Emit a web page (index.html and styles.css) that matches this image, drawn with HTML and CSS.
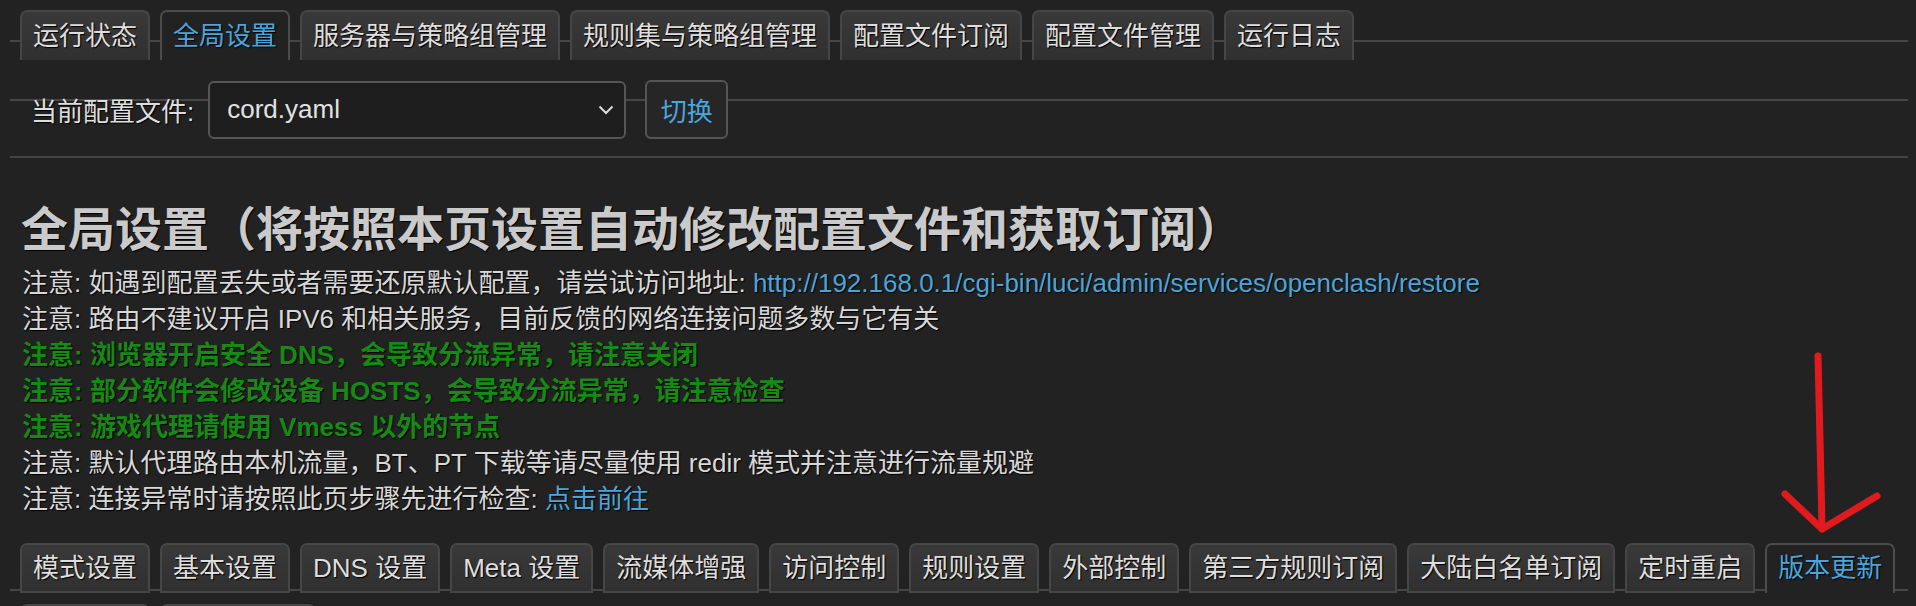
FILE: index.html
```html
<!DOCTYPE html>
<html lang="zh-CN">
<head>
    <meta charset="UTF-8">
    <meta name="viewport" content="width=device-width, initial-scale=1.0">
    <title>OpenClash - 全局设置</title>
    <link rel="stylesheet" href="styles.css">
</head>
<body>
    <div class="page">
        <!-- Main tabs -->
        <ul class="tabs top-tabs">
            <li class="tab">运行状态</li>
            <li class="tab active">全局设置</li>
            <li class="tab">服务器与策略组管理</li>
            <li class="tab">规则集与策略组管理</li>
            <li class="tab">配置文件订阅</li>
            <li class="tab">配置文件管理</li>
            <li class="tab">运行日志</li>
        </ul>

        <!-- Config file switcher -->
        <div class="cfg-row">
            <label class="cfg-label" for="cfgFile">当前配置文件:</label>
            <div class="select-box" id="cfgFile">
                <span>cord.yaml</span>
                <svg class="chevron" width="16" height="10" viewBox="0 0 16 10">
                    <polyline points="1.5,1.5 8,8 14.5,1.5" fill="none" stroke="#dcdcdc" stroke-width="2"/>
                </svg>
            </div>
            <button class="btn">切换</button>
        </div>

        <div class="divider"></div>

        <h2 class="title">全局设置（将按照本页设置自动修改配置文件和获取订阅）</h2>

        <div class="notes">
            <p>注意: 如遇到配置丢失或者需要还原默认配置，请尝试访问地址: <a href="#">http://192.168.0.1/cgi-bin/luci/admin/services/openclash/restore</a></p>
            <p>注意: 路由不建议开启 IPV6 和相关服务，目前反馈的网络连接问题多数与它有关</p>
            <p class="warn">注意: 浏览器开启安全 DNS，会导致分流异常，请注意关闭</p>
            <p class="warn">注意: 部分软件会修改设备 HOSTS，会导致分流异常，请注意检查</p>
            <p class="warn">注意: 游戏代理请使用 Vmess 以外的节点</p>
            <p>注意: 默认代理路由本机流量，BT、PT 下载等请尽量使用 redir 模式并注意进行流量规避</p>
            <p>注意: 连接异常时请按照此页步骤先进行检查: <a href="#">点击前往</a></p>
        </div>

        <!-- Settings tabs -->
        <ul class="tabs sub-tabs">
            <li class="tab">模式设置</li>
            <li class="tab">基本设置</li>
            <li class="tab">DNS 设置</li>
            <li class="tab">Meta 设置</li>
            <li class="tab">流媒体增强</li>
            <li class="tab">访问控制</li>
            <li class="tab">规则设置</li>
            <li class="tab">外部控制</li>
            <li class="tab">第三方规则订阅</li>
            <li class="tab">大陆白名单订阅</li>
            <li class="tab">定时重启</li>
            <li class="tab active">版本更新</li>
            <li class="tab">调试日志</li>
            <li class="tab">开发者选项</li>
        </ul>

        <!-- red hand-drawn arrow pointing at 版本更新 -->
        <svg class="arrow" width="110" height="190" viewBox="0 0 110 190">
            <path d="M43 6 C44 60 46 120 47 179" fill="none" stroke="#e11b1d" stroke-width="7" stroke-linecap="round"/>
            <path d="M10 144 L47 179 L102 146" fill="none" stroke="#e11b1d" stroke-width="7" stroke-linecap="round" stroke-linejoin="round"/>
        </svg>
    </div>
</body>
</html>
```

FILE: styles.css
```css
/* dark luci theme */
html, body {
    margin: 0;
    padding: 0;
    overflow: hidden;
}

body {
    background-color: #222222;
    color: #d6d6d6;
    font-family: "Liberation Sans", "Noto Sans CJK SC", sans-serif;
    font-size: 26px;
}

.page {
    position: relative;
    padding: 10px 8px 0 10px;
}

/* tabs */
.tabs {
    list-style: none;
    margin: 0;
    padding: 0 0 0 10px;
    display: flex;
    flex-wrap: wrap;
    column-gap: 10px;
}

.tab {
    height: 48px;
    line-height: 48px;
    padding: 0 11px;
    border: 2px solid #464646;
    border-bottom: none;
    border-radius: 7px 7px 0 0;
    background: linear-gradient(#393939, #303030);
    color: #dedede;
    text-shadow: 1px 1px 1px #000;
    white-space: nowrap;
}

.tab.active {
    background: #222222;
    color: #4aa5dc;
    border-color: #4c4c4c;
}

.top-tabs {
    background: linear-gradient(#464646, #464646) no-repeat 0 30px / 100% 2px;
}

.sub-tabs {
    margin-top: 26px;
    row-gap: 11px;
    background-image: linear-gradient(to bottom, transparent 46px, #464646 46px, #464646 48px, transparent 48px);
    background-size: 100% 59px;
    background-repeat: repeat-y;
}

.sub-tabs .tab {
    height: 46px;
    line-height: 46px;
    border-bottom: 2px solid #464646;
}

.sub-tabs .tab.active {
    border-bottom: none;
    height: 48px;
}

/* config switcher */
.cfg-row {
    display: flex;
    align-items: center;
    margin-top: 20px;
    padding-left: 21px;
    height: 59px;
    background: linear-gradient(#464646, #464646) no-repeat 0 19px / 100% 2px;
}

.cfg-label {
    color: #dedede;
    text-shadow: 1px 1px 1px #000;
    margin-right: 14px;
}

.select-box {
    box-sizing: border-box;
    width: 418px;
    height: 58px;
    display: flex;
    align-items: center;
    justify-content: space-between;
    padding: 0 10px 0 17px;
    background-color: #1e1e1e;
    border: 2px solid #555555;
    border-radius: 6px;
    color: #e2e2e2;
}

.chevron {
    display: block;
}

.btn {
    box-sizing: border-box;
    margin-left: 19px;
    height: 59px;
    width: 83px;
    padding: 0;
    font-family: inherit;
    font-size: 26px;
    color: #4aa5dc;
    background-color: #262626;
    border: 2px solid #555555;
    border-radius: 6px;
}

.divider {
    height: 2px;
    margin-top: 17px;
    background-color: #444444;
}

/* heading and notes */
.title {
    margin: 44px 0 0 11px;
    font-size: 47px;
    line-height: 56px;
    font-weight: bold;
    color: #cacaca;
    text-shadow: 1px 1px 1px #000;
}

.notes {
    margin: 7px 0 0 12px;
}

.notes p {
    margin: 0;
    line-height: 36px;
    color: #d8d8d8;
    text-shadow: 1px 1px 1px #000;
}

.notes p.warn {
    color: #158a15;
    font-weight: bold;
}

.notes a {
    color: #4aa5dc;
    text-decoration: none;
}

.arrow {
    position: absolute;
    left: 1775px;
    top: 350px;
}
```
